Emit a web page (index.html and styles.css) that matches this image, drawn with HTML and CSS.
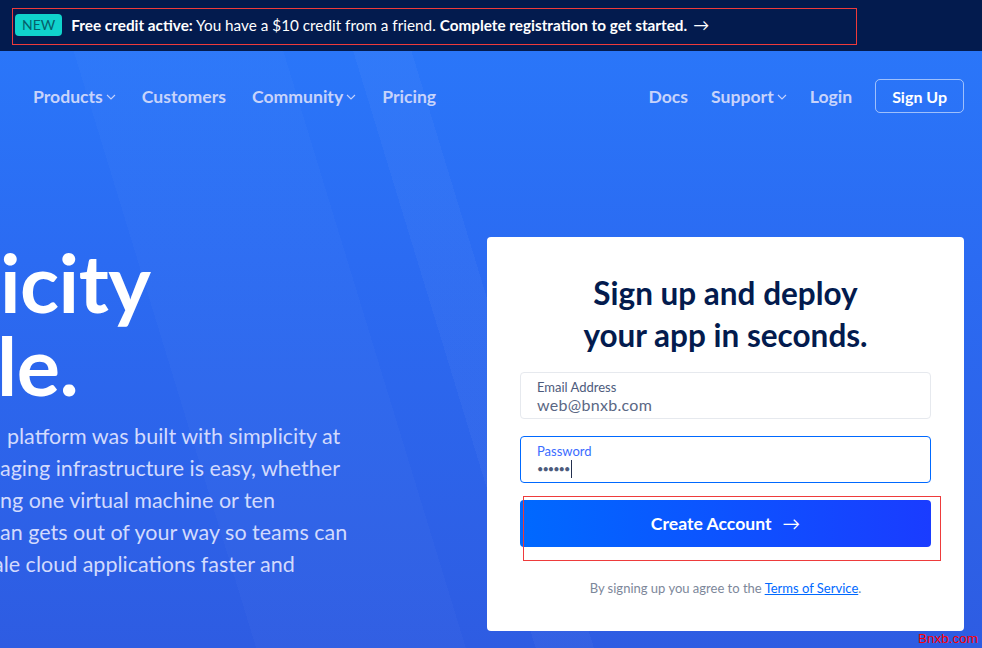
FILE: index.html
```html
<!DOCTYPE html>
<html lang="en">
<head>
<meta charset="utf-8">
<title>Sign up</title>
<link rel="stylesheet" href="styles.css">
</head>
<body>
<div class="banner">
  <div class="banner-box">
    <span class="badge">NEW</span>
    <span class="banner-text"><b>Free credit active:</b> You have a $10 credit from a friend. <b>Complete registration to get started.</b></span>
    <span class="banner-arrow">→</span>
  </div>
</div>
<div class="hero">
  <nav class="nav">
    <div class="nav-left">
      <a class="nav-item">Products<svg class="chev" viewBox="0 0 10 6" width="10" height="6"><path d="M1 1l4 4 4-4" fill="none" stroke="currentColor" stroke-width="1.1"/></svg></a>
      <a class="nav-item">Customers</a>
      <a class="nav-item">Community<svg class="chev" viewBox="0 0 10 6" width="10" height="6"><path d="M1 1l4 4 4-4" fill="none" stroke="currentColor" stroke-width="1.1"/></svg></a>
      <a class="nav-item">Pricing</a>
    </div>
    <div class="nav-right">
      <a class="nav-item">Docs</a>
      <a class="nav-item">Support<svg class="chev" viewBox="0 0 10 6" width="10" height="6"><path d="M1 1l4 4 4-4" fill="none" stroke="currentColor" stroke-width="1.1"/></svg></a>
      <a class="nav-item">Login</a>
      <a class="signup-btn">Sign Up</a>
    </div>
  </nav>
  <div class="main">
    <div class="intro">
      <h1 class="headline"><span class="hl-1">icity</span><span class="hl-2">le.</span></h1>
      <p class="lead">
        <span class="ln ln-1">platform was built with simplicity at</span>
        <span class="ln">aging infrastructure is easy, whether</span>
        <span class="ln">ng one virtual machine or ten</span>
        <span class="ln">an gets out of your way so teams can</span>
        <span class="ln ln-5">ale cloud applications faster and</span>
      </p>
    </div>
    <div class="card">
      <h2 class="card-title">Sign up and deploy<br>your app in seconds.</h2>
      <div class="field">
        <span class="field-label">Email Address</span>
        <span class="field-value">web@bnxb.com</span>
      </div>
      <div class="field field-active">
        <span class="field-label">Password</span>
        <span class="field-value pw">••••••<span class="caret"></span></span>
      </div>
      <div class="btn-wrap">
        <button class="create-btn">Create Account <span class="btn-arrow">→</span></button>
        <span class="mark-box"></span>
      </div>
      <p class="terms">By signing up you agree to the <a class="terms-link">Terms of Service</a>.</p>
    </div>
  </div>
  <span class="watermark">Bnxb.com</span>
</div>
</body>
</html>
```

FILE: styles.css
```css
* { box-sizing: border-box; }
html, body { margin: 0; padding: 0; }
body {
  width: 982px;
  height: 648px;
  overflow: hidden;
  font-family: Lato, "Noto Sans", sans-serif;
  background: #2d5fe4;
}

.banner {
  height: 51px;
  background: #031b4e;
  padding: 8px 0 0 12px;
}
.banner-box {
  width: 845px;
  height: 37px;
  border: 1px solid #ee3b3b;
  display: flex;
  align-items: center;
  padding: 0 0 4px 2px;
  color: #fff;
  font-size: 15.3px;
}
.badge {
  background: #10d3cc;
  color: #05606a;
  font-size: 14px;
  border-radius: 4px;
  height: 22px;
  line-height: 22px;
  padding: 0 7px;
  margin-right: 9px;
}
.banner-text { white-space: nowrap; }
.banner-text b { font-weight: 700; }
.banner-arrow { margin-left: 6px; font-size: 16px; }

.hero {
  position: relative;
  height: 597px;
  background:
    linear-gradient(73deg, rgba(255,255,255,0) 46%, rgba(255,255,255,0.03) 46%, rgba(255,255,255,0.03) 51%, rgba(255,255,255,0) 51%),
    linear-gradient(73deg, rgba(255,255,255,0) 22%, rgba(255,255,255,0.02) 22%, rgba(255,255,255,0.02) 40%, rgba(255,255,255,0) 40%),
    linear-gradient(180deg, #2a76f9 0%, #2b6bf2 35%, #2e5ce2 100%);
}

.nav {
  display: flex;
  justify-content: space-between;
  align-items: center;
  padding: 28px 18px 0 33px;
  height: 62px;
}
.nav-left, .nav-right {
  display: flex;
  align-items: center;
}
.nav-left { gap: 26px; }
.nav-right { gap: 23px; }
.nav-item {
  color: #c7d3fb;
  font-size: 17.6px;
  font-weight: 700;
  display: flex;
  align-items: center;
  white-space: nowrap;
}
.chev { margin-left: 3px; margin-top: 2px; }
.signup-btn {
  color: #fff;
  font-size: 16px;
  font-weight: 700;
  height: 34px;
  line-height: 34px;
  padding: 0 16px;
  border: 1px solid rgba(255,255,255,0.55);
  border-radius: 5px;
}

.main {
  display: flex;
  align-items: flex-start;
  margin-top: 124px;
  padding-right: 18px;
}
.intro {
  flex: 1;
  overflow: hidden;
  padding-top: 3px;
  color: #fff;
}
.headline {
  margin: 0;
  font-size: 81px;
  line-height: 83px;
  font-weight: 700;
  letter-spacing: -0.5px;
}
.headline span { display: block; }
.hl-2 { margin-left: -3px; }
.lead {
  margin: 14px 0 0;
  font-size: 21.5px;
  line-height: 32px;
  color: #d2dafd;
  white-space: nowrap;
}
.ln { display: block; }
.ln-1 { padding-left: 7px; }
.ln-5 { margin-left: -7px; }

.card {
  width: 477px;
  height: 394px;
  background: #fff;
  border-radius: 4px;
  padding: 35px 33px 0;
  flex: none;
}
.card-title {
  margin: 0 0 16px;
  text-align: center;
  color: #031b4e;
  font-size: 31.5px;
  line-height: 42px;
  font-weight: 700;
}
.field {
  height: 47px;
  border: 1px solid #e6e9ee;
  border-radius: 4px;
  padding: 6px 0 0 16px;
  margin-bottom: 17px;
  display: flex;
  flex-direction: column;
}
.field-active { border-color: #0069ff; }
.field-label {
  font-size: 13px;
  line-height: 16px;
  color: #4d5b7c;
}
.field-active .field-label { color: #3a6cff; }
.field-value {
  font-size: 16px;
  line-height: 20px;
  color: #5a6784;
  letter-spacing: 0.3px;
}
.pw {
  display: flex;
  align-items: center;
  font-size: 11px;
  letter-spacing: -1px;
  color: #4d5b7c;
}
.caret {
  width: 1px;
  height: 18px;
  background: #23304f;
  margin-left: 2px;
}
.btn-wrap { position: relative; }
.create-btn {
  width: 100%;
  height: 47px;
  border: 0;
  border-radius: 4px;
  background: linear-gradient(90deg, #0069ff 0%, #1a3cff 100%);
  color: #fff;
  font-family: Lato, "Noto Sans", sans-serif;
  font-size: 17.6px;
  font-weight: 700;
  display: flex;
  align-items: center;
  justify-content: center;
}
.btn-arrow { margin-left: 11px; font-weight: 400; }
.mark-box {
  position: absolute;
  left: 3px;
  top: -4px;
  width: 418px;
  height: 65px;
  border: 1px solid #ee3b3b;
}
.terms {
  margin: 32px 0 0;
  text-align: center;
  font-size: 13px;
  line-height: 18px;
  color: #7d879a;
}
.terms-link {
  color: #0069ff;
  text-decoration: underline;
}
.watermark {
  position: absolute;
  right: 4px;
  bottom: 2px;
  color: #ff0000;
  font-family: "Liberation Sans", Arial, sans-serif;
  font-size: 13.5px;
}
```
